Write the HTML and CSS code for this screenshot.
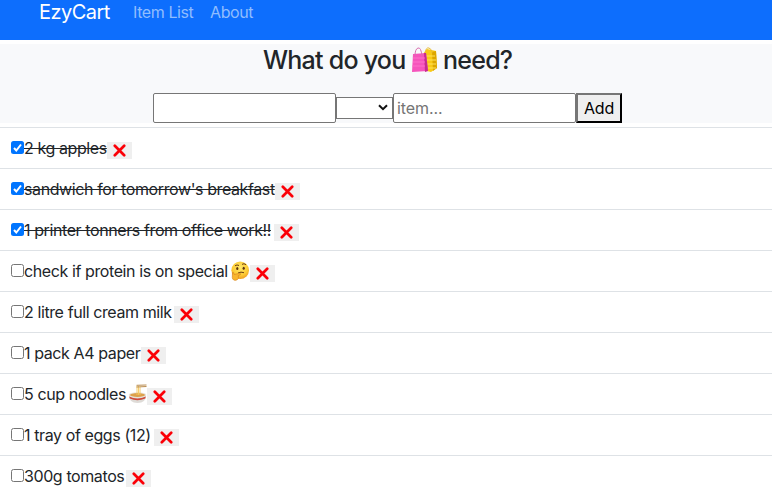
FILE: index.html
```
<!DOCTYPE html>
<html lang="en">
<head>
<meta charset="utf-8">
<title>EzyCart</title>
<link rel="stylesheet" href="styles.css">
</head>
<body>
<svg class="defs" width="0" height="0" aria-hidden="true">
  <symbol id="cross" viewBox="0 0 13 13"><path d="M1.8 1.8 11.2 11.2M11.2 1.8 1.8 11.2" stroke="#fb0007" stroke-width="2.7" stroke-linecap="round"/></symbol>
  <symbol id="tick" viewBox="0 0 13 13"><path d="M3 7 5.3 9.5 10 3.5" fill="none" stroke="#fff" stroke-width="2"/></symbol>
</svg>
<nav class="navbar">
  <a class="brand">EzyCart</a>
  <a class="link list-link">Item List</a>
  <a class="link">About</a>
</nav>
<header class="panel">
  <h1><span class="what">What do you</span><svg class="bags" viewBox="0 0 27 27"><path d="M12 8 16 3 25 5 26 22 20 26 12 24Z" fill="#f9c915"/><path d="m21 6 4-1 1 17-4 3Z" fill="#dca600"/><path d="M15 10h9M15 14h10M15 18h10M15 22h10" stroke="#ffe35a" stroke-width="1"/><path d="M14 7q1-6 4-5t3 5" fill="none" stroke="#e8bd37" stroke-width="1"/><path d="m2 8 13-1 2 18-16 1Z" fill="#f654bc"/><path d="m13 7 2 0 2 18-3 1Z" fill="#c62b91"/><path d="M2 12h12M2 16h12M1 20h13" stroke="#ff79cd" stroke-width=".8"/><path d="M4 10q0-7 3-8t4 8" fill="none" stroke="#d96faf" stroke-width="1"/></svg><span class="need">need?</span></h1>
  <form class="form">
    <input class="field" type="text">
    <span class="select"><svg width="10" height="7" viewBox="0 0 10 7"><path d="m1 1.2 4 4 4-4" fill="none" stroke="#111" stroke-width="2"/></svg></span>
    <input class="field" type="text" placeholder="item...">
    <button class="add" type="button">Add</button>
  </form>
</header>
<main class="list">
  <div class="row done"><span class="box"><svg><use href="#tick"/></svg></span><span class="text" style="width:83px">2 kg apples</span><button class="del"><svg><use href="#cross"/></svg></button></div>
  <div class="row done"><span class="box"><svg><use href="#tick"/></svg></span><span class="text" style="width:251px">sandwich for tomorrow's breakfast</span><button class="del"><svg><use href="#cross"/></svg></button></div>
  <div class="row done"><span class="box"><svg><use href="#tick"/></svg></span><span class="text" style="width:250px">1 printer tonners from office work!!</span><button class="del"><svg><use href="#cross"/></svg></button></div>
  <div class="row"><span class="box"></span><span class="text" style="width:205px">check if protein is on special</span><svg class="emoji" viewBox="0 0 20 20"><defs><radialGradient id="face" cx=".5" cy=".35" r=".65"><stop offset="0" stop-color="#ffe86b"/><stop offset=".65" stop-color="#fdcc35"/><stop offset="1" stop-color="#ee9c22"/></radialGradient></defs><circle cx="10.2" cy="9.3" r="8.8" fill="url(#face)"/><path d="M5 4.8q2-1.5 4-.3M12 3.4q2-1.5 4 .3M8 12q3-1.6 6-.3" fill="none" stroke="#6b3d12" stroke-width="1"/><ellipse cx="7.3" cy="7.5" rx="1.1" ry="1.5" fill="#5a3210"/><ellipse cx="13.7" cy="7.2" rx="1.1" ry="1.5" fill="#5a3210"/><path d="M2.5 11.5q1.2-.8 1.7 2l5.500-1.200q1.400.2.6 1.400l-2 .8q1 3.500-1.500 4.500-4 1.200-4.500-2.500Z" fill="#f9b52c" stroke="#d98720" stroke-width=".7"/></svg><button class="del"><svg><use href="#cross"/></svg></button></div>
  <div class="row"><span class="box"></span><span class="text" style="width:150px">2 litre full cream milk</span><button class="del"><svg><use href="#cross"/></svg></button></div>
  <div class="row"><span class="box"></span><span class="text" style="width:117px">1 pack A4 paper</span><button class="del"><svg><use href="#cross"/></svg></button></div>
  <div class="row"><span class="box"></span><span class="text" style="width:102px">5 cup noodles</span><svg class="emoji" viewBox="0 0 20 20"><path d="M2 11q0 8 8.500 8t8.500-8Z" fill="#dedbd7"/><path d="M2.200 12.500q8 4 16.600 0l-.5 2q-8 3.500-15.600 0Z" fill="#cf4a3d"/><ellipse cx="10.500" cy="11" rx="8.800" ry="2.700" fill="#e8e3da"/><ellipse cx="10.500" cy="11" rx="7.500" ry="1.900" fill="#dda04b"/><path d="M10 2v9M11.500 2v9M13 3v8" stroke="#f4c65f" stroke-width=".9"/><path d="M9.500 1.300 19.500 1M9.500 3 19.500 2.500" stroke="#b98c50" stroke-width="1"/></svg><button class="del"><svg><use href="#cross"/></svg></button></div>
  <div class="row"><span class="box"></span><span class="text" style="width:130px">1 tray of eggs (12)</span><button class="del"><svg><use href="#cross"/></svg></button></div>
  <div class="row"><span class="box"></span><span class="text" style="width:102px">300g tomatos</span><button class="del"><svg><use href="#cross"/></svg></button></div>
</main>
</body>
</html>
```
FILE: styles.css
```
* { box-sizing: border-box; }
html, body { height: 100%; overflow: hidden; }
body { margin: 0; background: #fff; color: #212529; font: 16px/24px Inter, "Liberation Sans", sans-serif; letter-spacing: -0.4px; }
.defs { display: block; height: 0; }
.navbar { height: 40px; background: #0d6efd; display: flex; align-items: flex-start; padding-left: 39px; }
.brand { color: #fff; font-size: 20px; letter-spacing: -0.55px; width: 94px; white-space: nowrap; }
.link { color: #90bdfe; white-space: nowrap; }
.list-link { width: 77px; }
.panel { height: 79px; margin-top: 4px; background: #f8f9fb; }
h1 { margin: 0; height: 49px; padding-left: 263px; display: flex; font-size: 25px; line-height: 33px; font-weight: 500; letter-spacing: -0.75px; white-space: nowrap; }
.what { width: 148px; }
.bags { width: 27px; height: 27px; margin: 2px 5px 0 0; }
.form { display: flex; align-items: center; height: 30px; margin: 0; padding-left: 153px; }
.field { width: 183px; height: 30px; border: 2px inset #767676; border-width: 1.5px; border-radius: 2px; padding: 1px 3px; background: #fff; font: inherit; letter-spacing: -0.1px; border-style: solid; }
.field::placeholder { color: #757575; }
.select { width: 57px; height: 22px; margin-top: -1px; border: 1px solid #767676; background: #fff; display: flex; align-items: center; justify-content: flex-end; padding-right: 4px; }
.add { width: 46px; height: 30px; padding: 0; border: 2px outset #000; border-color: #767676 #222 #222 #767676; background: #efefef; color: #000; font: inherit; letter-spacing: -0.2px; }
.list { padding-top: 4px; }
.row { height: 41px; border-top: 1px solid #dee2e6; padding-left: 11px; display: flex; align-items: flex-start; }
.box { width: 13px; height: 13px; margin-top: 13px; border: 1px solid #767676; border-radius: 2.500px; background: #fff; flex: none; }
.done .box { border: 0; background: #0075ff; }
.box svg { display: block; width: 13px; height: 13px; }
.text { height: 24px; margin-top: 8px; white-space: nowrap; flex: none; }
.done .text { text-decoration: line-through; }
.emoji { width: 20px; height: 20px; margin: 10px 0 0 1px; flex: none; }
.del { width: 25px; height: 17px; margin-top: 14px; padding: 0; border: 0; background: #efefef; flex: none; display: flex; align-items: center; justify-content: center; }
.del svg { width: 13px; height: 13px; }
```
